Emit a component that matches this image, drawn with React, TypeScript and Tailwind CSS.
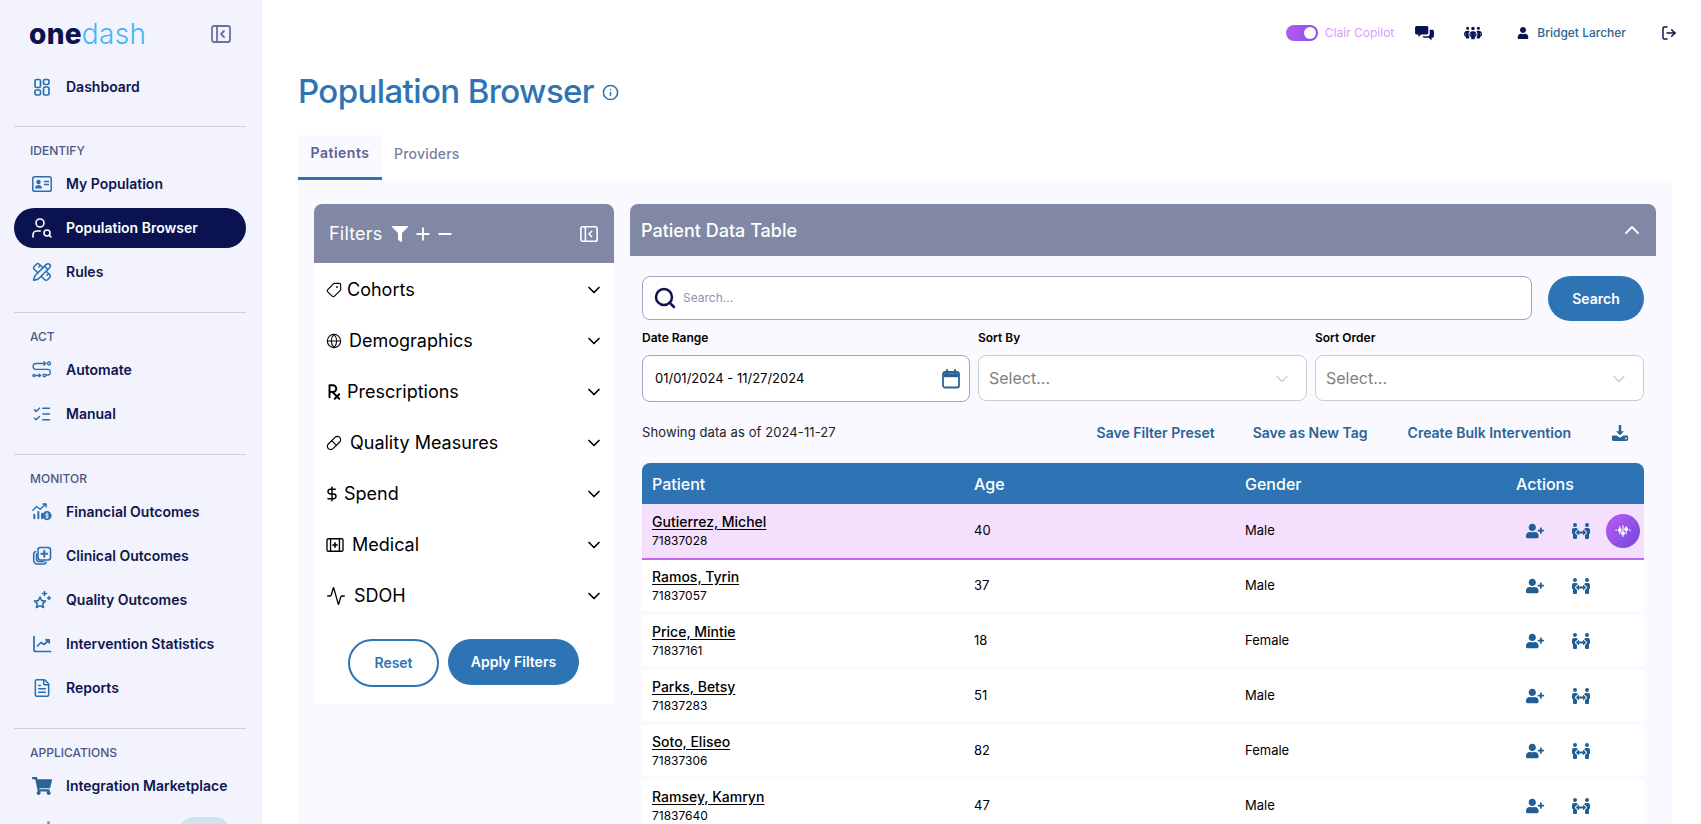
import { Activity, ChevronDown, ChevronUp, DollarSign, FileText, Globe, Info, ListChecks, LogOut, Minus, PencilRuler, Pill, Plus, Search, Tag, UserSearch } from "lucide-react";
import { FaFilter, FaPeopleArrows, FaShoppingCart, FaUser, FaUserPlus } from "react-icons/fa";
import { FaPeopleGroup } from "react-icons/fa6";
import { TbPrescription } from "react-icons/tb";
import type { ReactNode } from "react";

const iconClass = "w-5 h-5 text-[#2a6fb0]";

function CollapseIcon({ className }: { className?: string }) {
    return (
        <svg viewBox="0 0 20 20" fill="none" stroke="currentColor" strokeWidth="1.8" strokeLinecap="round" strokeLinejoin="round" className={className}>
            <rect x="1" y="2" width="18" height="16" rx="2" />
            <path d="M6 2v16M13 7l-3 3 3 3" />
        </svg>
    );
}

function DashIcon() {
    return (
        <svg viewBox="0 0 20 20" fill="none" stroke="currentColor" strokeWidth="1.7" className={iconClass}>
            <rect x="3" y="2.500" width="5.500" height="8" rx="1.500" />
            <rect x="3" y="13" width="5.500" height="5" rx="1.500" />
            <rect x="11.500" y="2.500" width="5.500" height="5" rx="1.500" />
            <rect x="11.500" y="10" width="5.500" height="8" rx="1.500" />
        </svg>
    );
}

function CardIcon() {
    return (
        <svg viewBox="0 0 20 16" className="w-5 h-4 text-[#2a6fb0]">
            <rect x="0.800" y="0.800" width="18.400" height="14.400" rx="1.800" fill="none" stroke="currentColor" strokeWidth="1.500" />
            <circle cx="6.500" cy="6" r="2.200" fill="currentColor" />
            <path d="M3 12.500c0-2.400 1.600-3.500 3.500-3.500s3.500 1.100 3.500 3.500z" fill="currentColor" />
            <path d="M12 5.500h5M12 8.500h5" stroke="currentColor" strokeWidth="1.400" />
        </svg>
    );
}

function AutomateIcon() {
    return (
        <svg viewBox="0 0 20 20" fill="none" stroke="currentColor" strokeWidth="1.300" strokeLinecap="round" strokeLinejoin="round" className={iconClass}>
            <circle cx="17" cy="3.500" r="1.500" />
            <path d="M13.500 3.500H4a2.800 2.800 0 0 0 0 5.800h11.500a2.800 2.800 0 0 1 0 5.700h-1.500" />
            <circle cx="12.300" cy="15.500" r="1.300" />
            <circle cx="2" cy="15.500" r="1.100" />
            <path d="M4 15.500h4.500M7.200 14.200l1.500 1.300-1.500 1.300M11.800 1.800l2 1.700-2 1.700" />
        </svg>
    );
}

function FinanceIcon() {
    return (
        <svg viewBox="0 0 22 20" fill="none" stroke="currentColor" strokeWidth="1.500" strokeLinecap="round" strokeLinejoin="round" className="w-[22px] h-5 text-[#2a6fb0]">
            <path d="M1 8l4-4 4 3 6-5.500M12 1.200h3.600v3.400" />
            <path d="M2.500 13v4M7 10v7M11 12v5" strokeWidth="2.200" />
            <circle cx="16.500" cy="14" r="5" fill="currentColor" stroke="none" />
            <path d="M18 12.300c-1-.8-3-.6-3 .7s3 .8 3 2.100-2 1.500-3 .6M16.500 11v6" stroke="#f2f3fc" strokeWidth="1" />
        </svg>
    );
}

function ClinicalIcon() {
    return (
        <svg viewBox="0 0 20 20" fill="none" stroke="currentColor" strokeWidth="1.600" strokeLinecap="round" className={iconClass}>
            <rect x="6" y="1.500" width="12.500" height="12.500" rx="2.500" />
            <path d="M12.250 4.800v5.900M9.300 7.750h5.900" strokeWidth="2" />
            <path d="M3.500 5.500c-1 .4-1.800 1.300-1.800 2.500v6.500a3.500 3.500 0 0 0 3.500 3.500h6.500c1.200 0 2.100-.7 2.500-1.800" />
            <path d="M4.500 8v5.500c0 1.100.9 2 2 2H12" />
        </svg>
    );
}

function StarsIcon() {
    return (
        <svg viewBox="0 0 20 20" fill="none" stroke="currentColor" strokeWidth="1.600" strokeLinejoin="round" strokeLinecap="round" className={iconClass}>
            <path d="M8 7l1.700 3.600 3.800.5-2.800 2.600.8 3.800L8 15.600l-3.500 1.900.8-3.800-2.800-2.600 3.800-.5z" />
            <path d="M12.500 1.500v4M10.500 3.500h4M17 6.500v3M15.500 8h3" />
        </svg>
    );
}

function StatsIcon() {
    return (
        <svg viewBox="0 0 20 20" fill="none" stroke="currentColor" strokeWidth="1.700" strokeLinecap="round" strokeLinejoin="round" className={iconClass}>
            <path d="M2 2.500V15.500a2 2 0 0 0 2 2h14.500" />
            <path d="M5.500 12l3.500-3.500 3 2 5-4.500M13.800 5.800h3.400v3.200" />
        </svg>
    );
}

function MedicalIcon() {
    return (
        <svg viewBox="0 0 20 18" fill="none" stroke="currentColor" strokeWidth="1.500" className="w-[18px] h-4">
            <rect x="1" y="2" width="18" height="14" rx="1.500" />
            <path d="M5 2v14M15 2v14" />
            <path d="M10 6v6M7 9h6" strokeWidth="1.800" />
        </svg>
    );
}

function CalendarIcon() {
    return (
        <svg viewBox="0 0 20 20" fill="none" stroke="#2a6496" className="w-5 h-5">
            <rect x="2" y="3" width="16" height="15.500" rx="2" strokeWidth="1.800" />
            <path d="M2.500 6.200h15" strokeWidth="4" />
            <path d="M6 1v3M14 1v3" strokeWidth="2" strokeLinecap="round" />
        </svg>
    );
}

function ChatIcon() {
    return (
        <svg viewBox="0 0 20 18" fill="#0a1350" className="w-[19px] h-[17px]">
            <path d="M1.500 1h11c.8 0 1.500.7 1.500 1.500v6c0 .8-.7 1.500-1.500 1.500H6.500L3.500 12.800V10h-2C.7 10 0 9.300 0 8.500v-6C0 1.700.7 1 1.500 1z" />
            <path d="M15.500 5h3c.8 0 1.500.7 1.500 1.500v5.500c0 .8-.7 1.500-1.500 1.500H17.500v3l-3-3H9.500c-.8 0-1.500-.7-1.500-1.500H13c1.400 0 2.500-1.100 2.500-2.500z" />
        </svg>
    );
}

function DownloadIcon() {
    return (
        <svg viewBox="0 0 20 20" fill="#2a6496" className="w-[18px] h-[18px]">
            <path d="M8.600 1h2.800v7h3L10 12.600 5.600 8h3z" />
            <path d="M1 14.200c0-.9.7-1.400 1.500-1.400h3.600l3.900 2.500 3.900-2.500h3.600c.8 0 1.500.5 1.500 1.400v3c0 .9-.7 1.600-1.500 1.600h-15c-.8 0-1.500-.7-1.500-1.600z" />
            <circle cx="16.500" cy="16" r="1" fill="#f9f9ff" />
        </svg>
    );
}

function WaveIcon() {
    return (
        <svg viewBox="0 0 20 20" fill="none" stroke="white" strokeWidth="1.200" strokeLinecap="round" className="w-[18px] h-[18px]">
            <path d="M2 9h1M17 9h1M6.500 5v8M10 4v12M13.500 5v8" />
            <circle cx="6.500" cy="9" r="1.500" fill="white" />
            <circle cx="10" cy="12.500" r="1.500" fill="white" />
            <circle cx="13.500" cy="8" r="1.500" fill="white" />
        </svg>
    );
}

function NavItem({ icon, label, active }: { icon: ReactNode; label: string; active?: boolean }) {
    return (
        <div className={`h-10 flex items-center gap-[14px] pl-[18px] rounded-[20px] text-sm font-semibold ${active ? "bg-[#0a1350] text-white" : "text-[#0f1650]"}`}>
            <span className="w-5 flex justify-center">{icon}</span>
            {label}
        </div>
    );
}

function NavSection({ title, children }: { title: string; children: ReactNode }) {
    return (
        <div className="ml-[14px] mr-4 border-t border-[#cfd0e2] pt-4 pb-5">
            <div className="h-4 pl-4 mb-[5px] text-xs leading-4 font-medium text-[#4f5585]">{title}</div>
            <div className="flex flex-col gap-1">{children}</div>
        </div>
    );
}

function Sidebar() {
    return (
        <aside className="w-[262px] h-screen shrink-0 bg-[#f2f3fc] overflow-hidden">
            <div className="h-[67px] pl-[29px] pr-[31px] flex items-start justify-between">
                <div className="mt-[17px] text-[28px] leading-[34px] tracking-[0.3px]">
                    <span className="font-extrabold text-[#0a1350]">one</span>
                    <span className="font-light text-[#45b6f5]">dash</span>
                </div>
                <CollapseIcon className="w-5 h-5 mt-6 text-[#6a6f9e]" />
            </div>
            <div className="ml-[14px] mr-4 pb-[19px]">
                <NavItem icon={<DashIcon />} label="Dashboard" />
            </div>
            <NavSection title="IDENTIFY">
                <NavItem icon={<CardIcon />} label="My Population" />
                <NavItem icon={<UserSearch className="w-6 h-6 shrink-0 text-white" strokeWidth={1.6} />} label="Population Browser" active />
                <NavItem icon={<PencilRuler className={iconClass} strokeWidth={1.8} />} label="Rules" />
            </NavSection>
            <NavSection title="ACT">
                <NavItem icon={<AutomateIcon />} label="Automate" />
                <NavItem icon={<ListChecks className={iconClass} strokeWidth={1.8} />} label="Manual" />
            </NavSection>
            <NavSection title="MONITOR">
                <NavItem icon={<FinanceIcon />} label="Financial Outcomes" />
                <NavItem icon={<ClinicalIcon />} label="Clinical Outcomes" />
                <NavItem icon={<StarsIcon />} label="Quality Outcomes" />
                <NavItem icon={<StatsIcon />} label="Intervention Statistics" />
                <NavItem icon={<FileText className={iconClass} strokeWidth={1.8} />} label="Reports" />
            </NavSection>
            <NavSection title="APPLICATIONS">
                <NavItem icon={<FaShoppingCart className="w-5 h-5 text-[#2a6496]" />} label="Integration Marketplace" />
                <div className="h-10 flex items-start justify-between pl-[33px] pr-[15px] pt-[7px]">
                    <span className="w-[3px] h-[3px] mt-1 rounded-full bg-[#c45cf5]" />
                    <span className="w-[53px] h-8 rounded-full bg-[#cfe3f1]" />
                </div>
            </NavSection>
        </aside>
    );
}

function TopBar() {
    return (
        <div className="h-[66px] -mr-[29px] flex items-center justify-end pr-6 text-xs">
            <div className="w-8 h-4 mr-[7px] rounded-full bg-gradient-to-r from-[#b05cf0] to-[#8a4fe0] flex items-center justify-end pr-[2px]">
                <span className="w-3 h-3 rounded-full bg-white" />
            </div>
            <span className="text-[#d59cff] mr-[21px]">Clair Copilot</span>
            <ChatIcon />
            <FaPeopleGroup className="w-[18px] h-[18px] text-[#0a1350] ml-[30px] mr-[35px]" />
            <FaUser className="w-3 h-3 text-[#0a1350] mr-2" />
            <span className="font-medium text-[#2a6496] mr-[35px]">Bridget Larcher</span>
            <LogOut className="w-4 h-4 text-[#0a1350]" strokeWidth={2.2} />
        </div>
    );
}

const filters: { icon: ReactNode; label: string; gap: string }[] = [
    { icon: <Tag className="w-4 h-4 -scale-x-100" strokeWidth={1.7} />, label: "Cohorts", gap: "gap-[5px]" },
    { icon: <Globe className="w-4 h-4" strokeWidth={1.6} />, label: "Demographics", gap: "gap-[7px]" },
    { icon: <TbPrescription className="w-[18px] h-[18px] -ml-[1px] stroke-[2.6]" />, label: "Prescriptions", gap: "gap-[4px]" },
    { icon: <Pill className="w-4 h-4" strokeWidth={1.7} />, label: "Quality Measures", gap: "gap-2" },
    { icon: <DollarSign className="w-4 h-4 -ml-[2px]" strokeWidth={2.2} />, label: "Spend", gap: "gap-[4px]" },
    { icon: <MedicalIcon />, label: "Medical", gap: "gap-2" },
    { icon: <Activity className="w-5 h-5" strokeWidth={1.6} />, label: "SDOH", gap: "gap-2" },
];

function FilterPanel() {
    return (
        <div className="w-[300px] shrink-0 self-start bg-white">
            <div className="h-[59px] rounded-t-lg bg-[#8088a5] text-white flex items-center justify-between pl-[15px] pr-[16px]">
                <div className="flex items-center text-[18px] tracking-[0.2px]">
                    Filters
                    <FaFilter className="w-4 h-4 ml-[9px] mr-[5px]" />
                    <Plus className="w-5 h-5" strokeWidth={2.2} />
                    <Minus className="w-5 h-5 ml-[2px]" strokeWidth={2.2} />
                </div>
                <CollapseIcon className="w-[18px] h-[18px]" />
            </div>
            <div className="pt-[1px]">
                {filters.map((f) => (
                    <div key={f.label} className="h-[51px] flex items-center justify-between pl-3 pr-[10px] text-black">
                        <div className={`flex items-center text-[18px] ${f.gap}`}>
                            {f.icon}
                            {f.label}
                        </div>
                        <ChevronDown className="w-5 h-5" strokeWidth={2} />
                    </div>
                ))}
            </div>
            <div className="flex gap-[9px] pl-[34px] pt-[18px] pb-[17px] text-sm font-semibold">
                <button className="w-[91px] h-[48px] rounded-full border-2 border-[#2e74b5] text-[#2e74b5]">Reset</button>
                <button className="w-[131px] h-[46px] rounded-full bg-[#2e74b5] text-white">Apply Filters</button>
            </div>
        </div>
    );
}

const patients = [
    { name: "Gutierrez, Michel", id: "71837028", age: 40, gender: "Male" },
    { name: "Ramos, Tyrin", id: "71837057", age: 37, gender: "Male" },
    { name: "Price, Mintie", id: "71837161", age: 18, gender: "Female" },
    { name: "Parks, Betsy", id: "71837283", age: 51, gender: "Male" },
    { name: "Soto, Eliseo", id: "71837306", age: 82, gender: "Female" },
    { name: "Ramsey, Kamryn", id: "71837640", age: 47, gender: "Male" },
];

function SelectBox() {
    return (
        <div className="h-[46px] pt-[1px] rounded-lg border border-[#cccccc] bg-white flex items-center justify-between pl-[10px] pr-[14px] text-[16px] font-normal text-[#808080]">
            Select...
            <ChevronDown className="w-5 h-5 text-[#cccccc]" strokeWidth={1.5} />
        </div>
    );
}

function PatientTable() {
    return (
        <div className="mt-[7px] text-black">
            <div className="h-[41px] rounded-t-lg bg-[#2e74b5] text-white text-base font-medium grid grid-cols-[322px_271px_271px_1fr] items-center pl-[10px]">
                <span>Patient</span>
                <span>Age</span>
                <span>Gender</span>
                <span>Actions</span>
            </div>
            {patients.map((p, i) => (
                <div key={p.id} className={`grid grid-cols-[322px_271px_271px_1fr] items-center pl-[10px] text-[13px] ${i === 0 ? "h-[56px] bg-[#f4dffd] border-b-2 border-[#c266f0]" : "h-[51px] bg-white mb-1"}`}>
                    <div>
                        <div className="text-sm font-medium leading-[19px] underline underline-offset-2">{p.name}</div>
                        <div className="text-xs leading-[19px]">{p.id}</div>
                    </div>
                    <span>{p.age}</span>
                    <span>{p.gender}</span>
                    <div className="flex items-center pl-[10px]">
                        <FaUserPlus className="w-[18px] h-[18px] text-[#1f5f96] mr-[28px]" />
                        <FaPeopleArrows className="w-[18px] h-[18px] text-[#1f5f96] mr-4" />
                        {i === 0 && (
                            <span className="w-[34px] h-[34px] rounded-full bg-gradient-to-br from-[#bb5cf2] to-[#6f45dd] flex items-center justify-center">
                                <WaveIcon />
                            </span>
                        )}
                    </div>
                </div>
            ))}
        </div>
    );
}

function DataCard() {
    return (
        <div className="w-[1026px] shrink-0">
            <div className="h-[52px] rounded-t-lg bg-[#8088a5] text-white flex items-center justify-between pl-[11px] pr-[12px]">
                <span className="text-[18px] font-medium">Patient Data Table</span>
                <ChevronUp className="w-6 h-6" strokeWidth={1.8} />
            </div>
            <div className="px-3 pt-5">
                <div className="flex gap-4">
                    <div className="h-[44px] flex-1 rounded-lg border border-[#a3a3c4] bg-white flex items-center pl-[10px] gap-[6px] text-xs text-[#8f8fb0]">
                        <Search className="w-6 h-6 text-[#0a1350]" strokeWidth={2.5} />
                        Search...
                    </div>
                    <button className="w-[96px] h-[45px] rounded-full bg-[#2e74b5] text-white text-sm font-semibold">Search</button>
                </div>
                <div className="mt-1 grid grid-cols-[328px_329px_1fr] gap-x-2 text-xs font-semibold text-black">
                    <span className="h-[30px] leading-[26px]">Date Range</span>
                    <span className="h-[30px] leading-[26px]">Sort By</span>
                    <span className="h-[30px] leading-[26px]">Sort Order</span>
                    <div className="h-[47px] pt-[1px] rounded-lg border border-[#a3a3c4] bg-white flex items-center justify-between pl-3 pr-2 text-[13px] font-normal">
                        01/01/2024 - 11/27/2024
                        <CalendarIcon />
                    </div>
                    <SelectBox />
                    <SelectBox />
                </div>
                <div className="h-[46px] mt-2 flex items-center text-[13px] tracking-[0.1px] text-[#222222]">
                    <span className="flex-1">Showing data as of 2024-11-27</span>
                    <div className="flex items-center text-sm font-semibold tracking-normal text-[#2a6496]">
                        <span className="mr-[38px]">Save Filter Preset</span>
                        <span className="mr-10">Save as New Tag</span>
                        <span className="mr-10">Create Bulk Intervention</span>
                        <span className="mr-[15px]"><DownloadIcon /></span>
                    </div>
                </div>
                <PatientTable />
            </div>
        </div>
    );
}

export default function App() {
    return (
        <div className="h-screen flex overflow-hidden bg-white font-['Inter',sans-serif]">
            <Sidebar />
            <main className="flex-1 min-w-0 pl-9 pr-[29px]">
                <TopBar />
                <div className="h-[54px] flex items-center gap-2 -mt-[1px]">
                    <h1 className="text-[33px] font-medium tracking-[-0.6px] text-[#2e74b5]">Population Browser</h1>
                    <Info className="w-[17px] h-[17px] text-[#2e74b5]" strokeWidth={2.2} />
                </div>
                <div className="h-[61px] flex items-end">
                    <div className="w-[84px] h-[45px] pb-[7px] bg-[#f9f9ff] border-b-[3px] border-[#2e74b5] flex items-center justify-center text-sm font-semibold tracking-[0.5px] text-[#5d6190]">Patients</div>
                    <div className="ml-3 h-[45px] pb-2 flex items-center text-sm font-medium tracking-[0.2px] text-[#7a7ea3]">Providers</div>
                </div>
                <div className="bg-[#f9f9ff] min-h-[700px] flex gap-4 pl-4 pt-6">
                    <FilterPanel />
                    <DataCard />
                </div>
            </main>
        </div>
    );
}
